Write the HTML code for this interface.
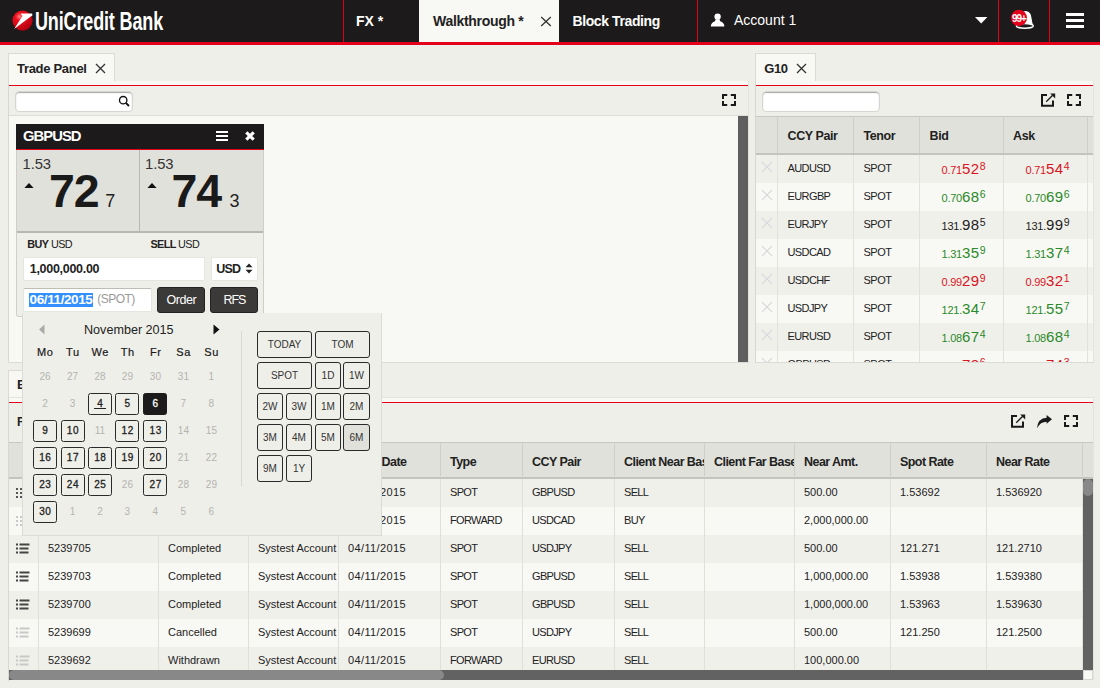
<!DOCTYPE html><html><head><meta charset="utf-8"><style>
html,body{margin:0;padding:0;}
body{width:1100px;height:688px;overflow:hidden;position:relative;background:#efefe9;font-family:"Liberation Sans",sans-serif;}
div{box-sizing:border-box;}
</style></head><body>
<div style="position:absolute;left:0px;top:0px;width:1100px;height:42px;background:#1c1a1a"></div>
<div style="position:absolute;left:0px;top:42px;width:1100px;height:3px;background:#e2001a"></div>
<svg style="position:absolute;left:0;top:0" width="40" height="42" viewBox="0 0 40 42">
<defs><radialGradient id="lg" cx="0.35" cy="0.3" r="0.75"><stop offset="0" stop-color="#ff8a8a"/><stop offset="0.25" stop-color="#f0101e"/><stop offset="1" stop-color="#b0000e"/></radialGradient></defs>
<circle cx="22.5" cy="20.6" r="10.1" fill="url(#lg)"/>
<path d="M14.2 29 L22.4 15.9 L20.6 13.6 L32.1 13.6 L32.5 15.2 Z" fill="#fff"/>
</svg>
<div style="position:absolute;left:35px;top:5.5px;font-size:25px;line-height:30px;font-weight:700;color:#fff;white-space:nowrap;transform:scaleX(0.72);transform-origin:0 0;letter-spacing:-0.2px">UniCredit Bank</div>
<div style="position:absolute;left:343px;top:0px;width:1px;height:42px;background:#e2001a"></div>
<div style="position:absolute;left:356px;top:12.83px;font-size:14px;line-height:16.10px;font-weight:700;color:#fff;white-space:nowrap;">FX *</div>
<div style="position:absolute;left:419px;top:0px;width:140px;height:42px;background:#f8f8f4"></div>
<div style="position:absolute;left:433px;top:13.13px;font-size:14px;line-height:16.10px;font-weight:700;color:#222;white-space:nowrap;letter-spacing:-0.3px">Walkthrough *</div>
<svg style="position:absolute;left:540px;top:16px" width="12" height="11" viewBox="0 0 12 11"><path d="M1.2 1 L10.8 10 M10.8 1 L1.2 10" stroke="#333" stroke-width="1.3"/></svg>
<div style="position:absolute;left:572.5px;top:13.13px;font-size:14px;line-height:16.10px;font-weight:700;color:#fff;white-space:nowrap;letter-spacing:-0.4px">Block Trading</div>
<div style="position:absolute;left:697px;top:0px;width:1px;height:42px;background:#e2001a"></div>
<svg style="position:absolute;left:710px;top:12.6px" width="16" height="14" viewBox="0 0 16 14"><circle cx="7.6" cy="3.6" r="3.2" fill="#fff"/><path d="M5.6 6.2 L9.6 6.2 L10.2 8.2 Q14.2 9.4 14.4 13.4 L0.8 13.4 Q1.0 9.4 5.0 8.2 Z" fill="#fff"/></svg>
<div style="position:absolute;left:734px;top:11.93px;font-size:14px;line-height:16.10px;font-weight:400;color:#fff;white-space:nowrap;">Account 1</div>
<svg style="position:absolute;left:975px;top:17px" width="13" height="7" viewBox="0 0 13 7"><path d="M0 0 L12.4 0 L6.2 6.6 Z" fill="#fff"/></svg>
<div style="position:absolute;left:998px;top:0px;width:1px;height:42px;background:#e2001a"></div>
<svg style="position:absolute;left:1008px;top:8px" width="30" height="24" viewBox="0 0 30 24">
<path d="M8 17.8 Q10.5 15.5 10.8 10 Q11.5 3 18 3 Q23.2 3.6 23.6 10.5 Q24 15 25.6 17.8 Z" fill="#fff"/>
<ellipse cx="16.8" cy="17.9" rx="8.5" ry="2.3" fill="#1c1a1a" stroke="#fff" stroke-width="1.4"/>
<circle cx="10.9" cy="9.9" r="8.1" fill="#e2001a"/>
<text x="10.9" y="13.6" font-family="Liberation Sans" font-size="10" font-weight="700" fill="#fff" text-anchor="middle" letter-spacing="-1">99+</text>
</svg>
<div style="position:absolute;left:1049px;top:0px;width:1px;height:42px;background:#e2001a"></div>
<div style="position:absolute;left:1066px;top:13px;width:18px;height:3px;background:#fff"></div>
<div style="position:absolute;left:1066px;top:19px;width:18px;height:3px;background:#fff"></div>
<div style="position:absolute;left:1066px;top:25px;width:18px;height:3px;background:#fff"></div>
<div style="position:absolute;left:8px;top:53px;width:107px;height:29px;background:#f8f8f4;border:1px solid #dddad4;border-bottom:none"></div>
<div style="position:absolute;left:17px;top:61.64px;font-size:13px;line-height:14.95px;font-weight:700;color:#222;white-space:nowrap;letter-spacing:-0.3px">Trade Panel</div>
<svg style="position:absolute;left:95px;top:63px" width="11" height="11" viewBox="0 0 11 11"><path d="M1 1 L10 10 M10 1 L1 10" stroke="#333" stroke-width="1.3"/></svg>
<div style="position:absolute;left:8px;top:81px;width:741px;height:282px;background:#efefe9;border-left:1px solid #d8d8d2"></div>
<div style="position:absolute;left:9px;top:81px;width:739px;height:4px;background:#f8f8f4"></div>
<div style="position:absolute;left:9px;top:85px;width:739px;height:1px;background:#e2001a"></div>
<div style="position:absolute;left:9px;top:115px;width:739px;height:1px;background:#dedcd6"></div>
<div style="position:absolute;left:9px;top:116px;width:729px;height:246px;background:#f8f8f4"></div>
<div style="position:absolute;left:738px;top:116px;width:10px;height:246px;background:#5f5f5f"></div>
<div style="position:absolute;left:748px;top:81px;width:1px;height:282px;background:#e4e4de"></div>
<div style="position:absolute;left:8px;top:362px;width:741px;height:1px;background:#dcdcd6"></div>
<div style="position:absolute;left:15px;top:91px;width:118px;height:21px;background:#fff;border-radius:4px;box-shadow:inset 0 1px 1px rgba(0,0,0,0.35);border:1px solid #d6d6d0"></div>
<svg style="position:absolute;left:118px;top:95px" width="13" height="13" viewBox="0 0 13 13"><circle cx="5.2" cy="5.2" r="3.7" fill="none" stroke="#111" stroke-width="1.35"/><path d="M7.8 7.8 L11 11" stroke="#111" stroke-width="1.9"/></svg>
<svg style="position:absolute;left:722px;top:94px" width="14" height="12" viewBox="0 0 14 12"><path d="M1 5 L1 1 L5.2 1 M8.8 1 L13 1 L13 5 M13 7 L13 11 L8.8 11 M5.2 11 L1 11 L1 7" fill="none" stroke="#1a1a1a" stroke-width="2"/></svg>
<div style="position:absolute;left:16px;top:124px;width:248px;height:193px;background:#efefe9;border:1px solid #cfcfc9;border-top:none;border-radius:0 0 3px 3px"></div>
<div style="position:absolute;left:16px;top:124px;width:248px;height:26px;background:#1c1a1a"></div>
<div style="position:absolute;left:16px;top:149px;width:248px;height:1px;background:#e2001a"></div>
<div style="position:absolute;left:23px;top:128.41px;font-size:14.8px;line-height:17.02px;font-weight:700;color:#fff;white-space:nowrap;letter-spacing:-0.95px">GBPUSD</div>
<div style="position:absolute;left:216px;top:131px;width:12px;height:2px;background:#fff"></div>
<div style="position:absolute;left:216px;top:135px;width:12px;height:2px;background:#fff"></div>
<div style="position:absolute;left:216px;top:139px;width:12px;height:2px;background:#fff"></div>
<svg style="position:absolute;left:244px;top:130px" width="12" height="12" viewBox="0 0 12 12"><path d="M2.3 2.3 L9.7 9.7 M9.7 2.3 L2.3 9.7" stroke="#fff" stroke-width="3.1"/></svg>
<div style="position:absolute;left:17px;top:150px;width:246px;height:81px;background:#e1e1db"></div>
<div style="position:absolute;left:139px;top:150px;width:1px;height:81px;background:#b8b8b2"></div>
<div style="position:absolute;left:17px;top:231px;width:246px;height:2px;background:#b8b8b2"></div>
<div style="position:absolute;left:22.6px;top:155.71px;font-size:14.8px;line-height:17.02px;font-weight:400;color:#333;white-space:nowrap;letter-spacing:-0.1px">1.53</div>
<svg style="position:absolute;left:24.2px;top:182.8px" width="10" height="5.4" viewBox="0 0 10 5.4"><path d="M0 5.4 L5 0 L10 5.4 Z" fill="#111"/></svg>
<div style="position:absolute;left:49px;top:165.02px;font-size:46.5px;line-height:53.47px;font-weight:700;color:#1a1a1a;white-space:nowrap;letter-spacing:-1px">72</div>
<div style="position:absolute;left:105.3px;top:190.81px;font-size:18px;line-height:20.70px;font-weight:400;color:#222;white-space:nowrap;">7</div>
<div style="position:absolute;left:145.0px;top:155.71px;font-size:14.8px;line-height:17.02px;font-weight:400;color:#333;white-space:nowrap;letter-spacing:-0.1px">1.53</div>
<svg style="position:absolute;left:147.2px;top:182.8px" width="10" height="5.4" viewBox="0 0 10 5.4"><path d="M0 5.4 L5 0 L10 5.4 Z" fill="#111"/></svg>
<div style="position:absolute;left:171.4px;top:165.02px;font-size:46.5px;line-height:53.47px;font-weight:700;color:#1a1a1a;white-space:nowrap;letter-spacing:-1px">74</div>
<div style="position:absolute;left:229.5px;top:190.81px;font-size:18px;line-height:20.70px;font-weight:400;color:#222;white-space:nowrap;">3</div>
<div style="position:absolute;left:27.3px;top:238.23px;font-size:10.8px;line-height:12.42px;font-weight:400;color:#222;white-space:nowrap;letter-spacing:-0.55px"><b>BUY</b> USD</div>
<div style="position:absolute;left:150.5px;top:238.23px;font-size:10.8px;line-height:12.42px;font-weight:400;color:#222;white-space:nowrap;letter-spacing:-0.6px"><b>SELL</b> USD</div>
<div style="position:absolute;left:23px;top:257px;width:182px;height:24px;background:#fff;border:1px solid #e6e6e0;border-radius:2px"></div>
<div style="position:absolute;left:29.8px;top:261.89px;font-size:12.5px;line-height:14.37px;font-weight:700;color:#222;white-space:nowrap;letter-spacing:-0.3px">1,000,000.00</div>
<div style="position:absolute;left:211px;top:257px;width:47px;height:24px;background:#fff;border:1px solid #e6e6e0;border-radius:2px"></div>
<div style="position:absolute;left:216.3px;top:261.69px;font-size:12.5px;line-height:14.37px;font-weight:700;color:#222;white-space:nowrap;letter-spacing:-0.8px">USD</div>
<svg style="position:absolute;left:245px;top:263px" width="8" height="11" viewBox="0 0 8 11"><path d="M0.5 4.2 L4 0.5 L7.5 4.2 Z M0.5 6.8 L4 10.5 L7.5 6.8 Z" fill="#222"/></svg>
<div style="position:absolute;left:23px;top:288px;width:129px;height:24px;background:#fff;border:1px solid #e6e6e0;border-top:1px solid #bdbdb7;border-radius:2px"></div>
<div style="position:absolute;left:29.2px;top:293.3px;width:64px;height:13.6px;background:#3390ff"></div>
<div style="position:absolute;left:29.6px;top:291.78px;font-size:13.5px;line-height:15.52px;font-weight:700;color:#fff;white-space:nowrap;letter-spacing:-0.4px">06/11/2015</div>
<div style="position:absolute;left:97.2px;top:293.14px;font-size:12px;line-height:13.80px;font-weight:400;color:#9a9a9a;white-space:nowrap;letter-spacing:-0.5px">(SPOT)</div>
<div style="position:absolute;left:157px;top:287px;width:48px;height:26px;background:#3c3a38;border:1px solid #222;border-radius:3px"></div>
<div style="position:absolute;left:166.4px;top:293.29px;font-size:12.5px;line-height:14.37px;font-weight:400;color:#fff;white-space:nowrap;letter-spacing:-0.4px">Order</div>
<div style="position:absolute;left:210px;top:287px;width:48px;height:26px;background:#3c3a38;border:1px solid #222;border-radius:3px"></div>
<div style="position:absolute;left:223.5px;top:293.29px;font-size:12.5px;line-height:14.37px;font-weight:400;color:#fff;white-space:nowrap;letter-spacing:-1.1px">RFS</div>
<div style="position:absolute;left:755px;top:53px;width:61px;height:29px;background:#f8f8f4;border:1px solid #dddad4;border-bottom:none"></div>
<div style="position:absolute;left:764.3px;top:61.64px;font-size:13px;line-height:14.95px;font-weight:700;color:#222;white-space:nowrap;letter-spacing:-0.4px">G10</div>
<svg style="position:absolute;left:796px;top:63px" width="11" height="11" viewBox="0 0 11 11"><path d="M1 1 L10 10 M10 1 L1 10" stroke="#333" stroke-width="1.3"/></svg>
<div style="position:absolute;left:755px;top:81px;width:339px;height:282px;background:#efefe9;border-left:1px solid #d8d8d2"></div>
<div style="position:absolute;left:756px;top:81px;width:337px;height:4px;background:#f8f8f4"></div>
<div style="position:absolute;left:756px;top:85px;width:337px;height:1px;background:#e2001a"></div>
<div style="position:absolute;left:1093px;top:81px;width:1px;height:282px;background:#e4e4de"></div>
<div style="position:absolute;left:755px;top:362px;width:339px;height:1px;background:#dcdcd6"></div>
<div style="position:absolute;left:762px;top:91px;width:118px;height:21px;background:#fff;border-radius:4px;box-shadow:inset 0 1px 1px rgba(0,0,0,0.35);border:1px solid #d6d6d0"></div>
<svg style="position:absolute;left:1041px;top:93px" width="15" height="14" viewBox="0 0 15 14"><path d="M6 2 L1 2 L1 12.8 L12 12.8 L12 7.5" fill="none" stroke="#1a1a1a" stroke-width="2"/><path d="M5.2 8.8 L12.5 1.5" stroke="#1a1a1a" stroke-width="1.3"/><path d="M9.2 0.5 L14.2 0.5 L14.2 5.5 Z" fill="#1a1a1a"/></svg>
<svg style="position:absolute;left:1067px;top:94px" width="14" height="12" viewBox="0 0 14 12"><path d="M1 5 L1 1 L5.2 1 M8.8 1 L13 1 L13 5 M13 7 L13 11 L8.8 11 M5.2 11 L1 11 L1 7" fill="none" stroke="#1a1a1a" stroke-width="2"/></svg>
<div style="position:absolute;left:756px;top:116px;width:337px;height:39px;background:#e1e1db"></div>
<div style="position:absolute;left:756px;top:153px;width:337px;height:2px;background:#c4c4be"></div>
<div style="position:absolute;left:756px;top:116px;width:337px;height:1px;background:#c8c8c2"></div>
<div style="position:absolute;left:777px;top:116px;width:1px;height:37px;background:#cfcfc9"></div>
<div style="position:absolute;left:853px;top:116px;width:1px;height:37px;background:#cfcfc9"></div>
<div style="position:absolute;left:919px;top:116px;width:1px;height:37px;background:#cfcfc9"></div>
<div style="position:absolute;left:1003px;top:116px;width:1px;height:37px;background:#cfcfc9"></div>
<div style="position:absolute;left:1087px;top:116px;width:1px;height:37px;background:#cfcfc9"></div>
<div style="position:absolute;left:787.5px;top:128.59px;font-size:12.5px;line-height:14.37px;font-weight:700;color:#222;white-space:nowrap;letter-spacing:-0.4px">CCY Pair</div>
<div style="position:absolute;left:863.5px;top:128.59px;font-size:12.5px;line-height:14.37px;font-weight:700;color:#222;white-space:nowrap;letter-spacing:-0.4px">Tenor</div>
<div style="position:absolute;left:929.5px;top:128.59px;font-size:12.5px;line-height:14.37px;font-weight:700;color:#222;white-space:nowrap;letter-spacing:-0.4px">Bid</div>
<div style="position:absolute;left:1013px;top:128.59px;font-size:12.5px;line-height:14.37px;font-weight:700;color:#222;white-space:nowrap;letter-spacing:-0.4px">Ask</div>
<div style="position:absolute;left:756px;top:155px;width:337px;height:207px;overflow:hidden">
<div style="position:absolute;left:0;top:0px;width:337px;height:28px;background:#f0f0eb"></div>
<div style="position:absolute;left:0;top:28px;width:337px;height:28px;background:#f8f8f4"></div>
<div style="position:absolute;left:0;top:56px;width:337px;height:28px;background:#f0f0eb"></div>
<div style="position:absolute;left:0;top:84px;width:337px;height:28px;background:#f8f8f4"></div>
<div style="position:absolute;left:0;top:112px;width:337px;height:28px;background:#f0f0eb"></div>
<div style="position:absolute;left:0;top:140px;width:337px;height:28px;background:#f8f8f4"></div>
<div style="position:absolute;left:0;top:168px;width:337px;height:28px;background:#f0f0eb"></div>
<div style="position:absolute;left:0;top:196px;width:337px;height:28px;background:#f8f8f4"></div>
<div style="position:absolute;left:21px;top:0;width:1px;height:207px;background:#e2e2dc"></div>
<div style="position:absolute;left:97px;top:0;width:1px;height:207px;background:#e2e2dc"></div>
<div style="position:absolute;left:163px;top:0;width:1px;height:207px;background:#e2e2dc"></div>
<div style="position:absolute;left:247px;top:0;width:1px;height:207px;background:#e2e2dc"></div>
<div style="position:absolute;left:331px;top:0;width:1px;height:207px;background:#e2e2dc"></div>
<svg style="position:absolute;left:5px;top:6px" width="12" height="12" viewBox="0 0 12 12"><path d="M0.9 0.9 L11.1 11.1 M11.1 0.9 L0.9 11.1" stroke="#d6d7db" stroke-width="1.15"/></svg>
<div style="position:absolute;left:31.5px;top:7.04px;font-size:11px;line-height:13px;color:#222;white-space:nowrap;letter-spacing:-0.6px">AUDUSD</div>
<div style="position:absolute;left:107.5px;top:7.04px;font-size:11px;line-height:13px;color:#222;white-space:nowrap;letter-spacing:-0.5px">SPOT</div>
<div style="position:absolute;right:107.5px;top:3.8px;height:20px;white-space:nowrap;color:#d9141e;line-height:20px"><span style="font-size:11px;letter-spacing:-0.25px">0.71</span><span style="font-size:15px;letter-spacing:0.5px">52</span><span style="font-size:10.5px;position:relative;top:-4.1px">8</span></div>
<div style="position:absolute;right:23.5px;top:3.8px;height:20px;white-space:nowrap;color:#d9141e;line-height:20px"><span style="font-size:11px;letter-spacing:-0.25px">0.71</span><span style="font-size:15px;letter-spacing:0.5px">54</span><span style="font-size:10.5px;position:relative;top:-4.1px">4</span></div>
<svg style="position:absolute;left:5px;top:34px" width="12" height="12" viewBox="0 0 12 12"><path d="M0.9 0.9 L11.1 11.1 M11.1 0.9 L0.9 11.1" stroke="#d6d7db" stroke-width="1.15"/></svg>
<div style="position:absolute;left:31.5px;top:35.05px;font-size:11px;line-height:13px;color:#222;white-space:nowrap;letter-spacing:-0.6px">EURGBP</div>
<div style="position:absolute;left:107.5px;top:35.05px;font-size:11px;line-height:13px;color:#222;white-space:nowrap;letter-spacing:-0.5px">SPOT</div>
<div style="position:absolute;right:107.5px;top:31.8px;height:20px;white-space:nowrap;color:#2a8a2a;line-height:20px"><span style="font-size:11px;letter-spacing:-0.25px">0.70</span><span style="font-size:15px;letter-spacing:0.5px">68</span><span style="font-size:10.5px;position:relative;top:-4.1px">6</span></div>
<div style="position:absolute;right:23.5px;top:31.8px;height:20px;white-space:nowrap;color:#2a8a2a;line-height:20px"><span style="font-size:11px;letter-spacing:-0.25px">0.70</span><span style="font-size:15px;letter-spacing:0.5px">69</span><span style="font-size:10.5px;position:relative;top:-4.1px">6</span></div>
<svg style="position:absolute;left:5px;top:62px" width="12" height="12" viewBox="0 0 12 12"><path d="M0.9 0.9 L11.1 11.1 M11.1 0.9 L0.9 11.1" stroke="#d6d7db" stroke-width="1.15"/></svg>
<div style="position:absolute;left:31.5px;top:63.05px;font-size:11px;line-height:13px;color:#222;white-space:nowrap;letter-spacing:-0.6px">EURJPY</div>
<div style="position:absolute;left:107.5px;top:63.05px;font-size:11px;line-height:13px;color:#222;white-space:nowrap;letter-spacing:-0.5px">SPOT</div>
<div style="position:absolute;right:107.5px;top:59.8px;height:20px;white-space:nowrap;color:#222;line-height:20px"><span style="font-size:11px;letter-spacing:-0.25px">131.</span><span style="font-size:15px;letter-spacing:0.5px">98</span><span style="font-size:10.5px;position:relative;top:-4.1px">5</span></div>
<div style="position:absolute;right:23.5px;top:59.8px;height:20px;white-space:nowrap;color:#222;line-height:20px"><span style="font-size:11px;letter-spacing:-0.25px">131.</span><span style="font-size:15px;letter-spacing:0.5px">99</span><span style="font-size:10.5px;position:relative;top:-4.1px">9</span></div>
<svg style="position:absolute;left:5px;top:90px" width="12" height="12" viewBox="0 0 12 12"><path d="M0.9 0.9 L11.1 11.1 M11.1 0.9 L0.9 11.1" stroke="#d6d7db" stroke-width="1.15"/></svg>
<div style="position:absolute;left:31.5px;top:91.05px;font-size:11px;line-height:13px;color:#222;white-space:nowrap;letter-spacing:-0.6px">USDCAD</div>
<div style="position:absolute;left:107.5px;top:91.05px;font-size:11px;line-height:13px;color:#222;white-space:nowrap;letter-spacing:-0.5px">SPOT</div>
<div style="position:absolute;right:107.5px;top:87.8px;height:20px;white-space:nowrap;color:#2a8a2a;line-height:20px"><span style="font-size:11px;letter-spacing:-0.25px">1.31</span><span style="font-size:15px;letter-spacing:0.5px">35</span><span style="font-size:10.5px;position:relative;top:-4.1px">9</span></div>
<div style="position:absolute;right:23.5px;top:87.8px;height:20px;white-space:nowrap;color:#2a8a2a;line-height:20px"><span style="font-size:11px;letter-spacing:-0.25px">1.31</span><span style="font-size:15px;letter-spacing:0.5px">37</span><span style="font-size:10.5px;position:relative;top:-4.1px">4</span></div>
<svg style="position:absolute;left:5px;top:118px" width="12" height="12" viewBox="0 0 12 12"><path d="M0.9 0.9 L11.1 11.1 M11.1 0.9 L0.9 11.1" stroke="#d6d7db" stroke-width="1.15"/></svg>
<div style="position:absolute;left:31.5px;top:119.05px;font-size:11px;line-height:13px;color:#222;white-space:nowrap;letter-spacing:-0.6px">USDCHF</div>
<div style="position:absolute;left:107.5px;top:119.05px;font-size:11px;line-height:13px;color:#222;white-space:nowrap;letter-spacing:-0.5px">SPOT</div>
<div style="position:absolute;right:107.5px;top:115.8px;height:20px;white-space:nowrap;color:#d9141e;line-height:20px"><span style="font-size:11px;letter-spacing:-0.25px">0.99</span><span style="font-size:15px;letter-spacing:0.5px">29</span><span style="font-size:10.5px;position:relative;top:-4.1px">9</span></div>
<div style="position:absolute;right:23.5px;top:115.8px;height:20px;white-space:nowrap;color:#d9141e;line-height:20px"><span style="font-size:11px;letter-spacing:-0.25px">0.99</span><span style="font-size:15px;letter-spacing:0.5px">32</span><span style="font-size:10.5px;position:relative;top:-4.1px">1</span></div>
<svg style="position:absolute;left:5px;top:146px" width="12" height="12" viewBox="0 0 12 12"><path d="M0.9 0.9 L11.1 11.1 M11.1 0.9 L0.9 11.1" stroke="#d6d7db" stroke-width="1.15"/></svg>
<div style="position:absolute;left:31.5px;top:147.04px;font-size:11px;line-height:13px;color:#222;white-space:nowrap;letter-spacing:-0.6px">USDJPY</div>
<div style="position:absolute;left:107.5px;top:147.04px;font-size:11px;line-height:13px;color:#222;white-space:nowrap;letter-spacing:-0.5px">SPOT</div>
<div style="position:absolute;right:107.5px;top:143.8px;height:20px;white-space:nowrap;color:#2a8a2a;line-height:20px"><span style="font-size:11px;letter-spacing:-0.25px">121.</span><span style="font-size:15px;letter-spacing:0.5px">34</span><span style="font-size:10.5px;position:relative;top:-4.1px">7</span></div>
<div style="position:absolute;right:23.5px;top:143.8px;height:20px;white-space:nowrap;color:#2a8a2a;line-height:20px"><span style="font-size:11px;letter-spacing:-0.25px">121.</span><span style="font-size:15px;letter-spacing:0.5px">55</span><span style="font-size:10.5px;position:relative;top:-4.1px">7</span></div>
<svg style="position:absolute;left:5px;top:174px" width="12" height="12" viewBox="0 0 12 12"><path d="M0.9 0.9 L11.1 11.1 M11.1 0.9 L0.9 11.1" stroke="#d6d7db" stroke-width="1.15"/></svg>
<div style="position:absolute;left:31.5px;top:175.04px;font-size:11px;line-height:13px;color:#222;white-space:nowrap;letter-spacing:-0.6px">EURUSD</div>
<div style="position:absolute;left:107.5px;top:175.04px;font-size:11px;line-height:13px;color:#222;white-space:nowrap;letter-spacing:-0.5px">SPOT</div>
<div style="position:absolute;right:107.5px;top:171.8px;height:20px;white-space:nowrap;color:#2a8a2a;line-height:20px"><span style="font-size:11px;letter-spacing:-0.25px">1.08</span><span style="font-size:15px;letter-spacing:0.5px">67</span><span style="font-size:10.5px;position:relative;top:-4.1px">4</span></div>
<div style="position:absolute;right:23.5px;top:171.8px;height:20px;white-space:nowrap;color:#2a8a2a;line-height:20px"><span style="font-size:11px;letter-spacing:-0.25px">1.08</span><span style="font-size:15px;letter-spacing:0.5px">68</span><span style="font-size:10.5px;position:relative;top:-4.1px">4</span></div>
<svg style="position:absolute;left:5px;top:202px" width="12" height="12" viewBox="0 0 12 12"><path d="M0.9 0.9 L11.1 11.1 M11.1 0.9 L0.9 11.1" stroke="#d6d7db" stroke-width="1.15"/></svg>
<div style="position:absolute;left:31.5px;top:203.04px;font-size:11px;line-height:13px;color:#222;white-space:nowrap;letter-spacing:-0.6px">GBPUSD</div>
<div style="position:absolute;left:107.5px;top:203.04px;font-size:11px;line-height:13px;color:#222;white-space:nowrap;letter-spacing:-0.5px">SPOT</div>
<div style="position:absolute;right:107.5px;top:199.8px;height:20px;white-space:nowrap;color:#d9141e;line-height:20px"><span style="font-size:11px;letter-spacing:-0.25px">1.53</span><span style="font-size:15px;letter-spacing:0.5px">72</span><span style="font-size:10.5px;position:relative;top:-4.1px">6</span></div>
<div style="position:absolute;right:23.5px;top:199.8px;height:20px;white-space:nowrap;color:#d9141e;line-height:20px"><span style="font-size:11px;letter-spacing:-0.25px">1.53</span><span style="font-size:15px;letter-spacing:0.5px">74</span><span style="font-size:10.5px;position:relative;top:-4.1px">3</span></div>
</div>
<div style="position:absolute;left:8px;top:370px;width:120px;height:28px;background:#f8f8f4;border:1px solid #dddad4;border-bottom:none"></div>
<div style="position:absolute;left:17px;top:378.44px;font-size:13px;line-height:14.95px;font-weight:700;color:#222;white-space:nowrap;letter-spacing:-0.3px">Blotter</div>
<div style="position:absolute;left:8px;top:397px;width:1086px;height:284px;background:#efefe9;border-left:1px solid #d8d8d2"></div>
<div style="position:absolute;left:9px;top:397px;width:1084px;height:1px;background:#e4e4de"></div>
<div style="position:absolute;left:9px;top:398px;width:1084px;height:4px;background:#f8f8f4"></div>
<div style="position:absolute;left:9px;top:402px;width:1084px;height:1px;background:#e2001a"></div>
<div style="position:absolute;left:17px;top:415.64px;font-size:12px;line-height:13.80px;font-weight:700;color:#222;white-space:nowrap;">Filter</div>
<svg style="position:absolute;left:1011px;top:414px" width="15" height="14" viewBox="0 0 15 14"><path d="M6 2 L1 2 L1 12.8 L12 12.8 L12 7.5" fill="none" stroke="#1a1a1a" stroke-width="2"/><path d="M5.2 8.8 L12.5 1.5" stroke="#1a1a1a" stroke-width="1.3"/><path d="M9.2 0.5 L14.2 0.5 L14.2 5.5 Z" fill="#1a1a1a"/></svg>
<svg style="position:absolute;left:1037px;top:413.5px" width="16" height="15" viewBox="0 0 16 15"><path d="M0 14.2 Q0.8 4.2 9.6 3.7 L9.6 1 L15 5.3 L9.6 9.8 L9.6 7.8 Q3.4 7.8 0 14.2 Z" fill="#1a1a1a"/></svg>
<svg style="position:absolute;left:1064px;top:415px" width="14" height="12" viewBox="0 0 14 12"><path d="M1 5 L1 1 L5.2 1 M8.8 1 L13 1 L13 5 M13 7 L13 11 L8.8 11 M5.2 11 L1 11 L1 7" fill="none" stroke="#1a1a1a" stroke-width="2"/></svg>
<div style="position:absolute;left:1093px;top:397px;width:1px;height:284px;background:#e4e4de"></div>
<div style="position:absolute;left:9px;top:442px;width:1084px;height:35px;background:#e1e1db"></div>
<div style="position:absolute;left:9px;top:477px;width:1084px;height:2px;background:#c4c4be"></div>
<div style="position:absolute;left:9px;top:442px;width:1084px;height:1px;background:#c8c8c2"></div>
<div style="position:absolute;left:38px;top:442px;width:1px;height:34px;background:#cfcfc9"></div>
<div style="position:absolute;left:158px;top:442px;width:1px;height:34px;background:#cfcfc9"></div>
<div style="position:absolute;left:248px;top:442px;width:1px;height:34px;background:#cfcfc9"></div>
<div style="position:absolute;left:338px;top:442px;width:1px;height:34px;background:#cfcfc9"></div>
<div style="position:absolute;left:440px;top:442px;width:1px;height:34px;background:#cfcfc9"></div>
<div style="position:absolute;left:522px;top:442px;width:1px;height:34px;background:#cfcfc9"></div>
<div style="position:absolute;left:614px;top:442px;width:1px;height:34px;background:#cfcfc9"></div>
<div style="position:absolute;left:704px;top:442px;width:1px;height:34px;background:#cfcfc9"></div>
<div style="position:absolute;left:794px;top:442px;width:1px;height:34px;background:#cfcfc9"></div>
<div style="position:absolute;left:890px;top:442px;width:1px;height:34px;background:#cfcfc9"></div>
<div style="position:absolute;left:986px;top:442px;width:1px;height:34px;background:#cfcfc9"></div>
<div style="position:absolute;left:1082px;top:442px;width:1px;height:34px;background:#cfcfc9"></div>
<div style="position:absolute;left:9px;top:442px;width:1074px;height:34px;overflow:hidden">
<div style="position:absolute;left:29px;top:0;width:120px;height:34px;overflow:hidden"><div style="position:absolute;left:10px;top:12.79px;font-size:12.5px;line-height:15px;font-weight:700;color:#222;white-space:nowrap;letter-spacing:-0.55px">Deal ID</div></div>
<div style="position:absolute;left:149px;top:0;width:90px;height:34px;overflow:hidden"><div style="position:absolute;left:10px;top:12.79px;font-size:12.5px;line-height:15px;font-weight:700;color:#222;white-space:nowrap;letter-spacing:-0.55px">Status</div></div>
<div style="position:absolute;left:239px;top:0;width:90px;height:34px;overflow:hidden"><div style="position:absolute;left:10px;top:12.79px;font-size:12.5px;line-height:15px;font-weight:700;color:#222;white-space:nowrap;letter-spacing:-0.55px">Account</div></div>
<div style="position:absolute;left:329px;top:0;width:102px;height:34px;overflow:hidden"><div style="position:absolute;left:10px;top:12.79px;font-size:12.5px;line-height:15px;font-weight:700;color:#222;white-space:nowrap;letter-spacing:-0.55px">Trade Date</div></div>
<div style="position:absolute;left:431px;top:0;width:82px;height:34px;overflow:hidden"><div style="position:absolute;left:10px;top:12.79px;font-size:12.5px;line-height:15px;font-weight:700;color:#222;white-space:nowrap;letter-spacing:-0.55px">Type</div></div>
<div style="position:absolute;left:513px;top:0;width:92px;height:34px;overflow:hidden"><div style="position:absolute;left:10px;top:12.79px;font-size:12.5px;line-height:15px;font-weight:700;color:#222;white-space:nowrap;letter-spacing:-0.55px">CCY Pair</div></div>
<div style="position:absolute;left:605px;top:0;width:90px;height:34px;overflow:hidden"><div style="position:absolute;left:10px;top:12.79px;font-size:12.5px;line-height:15px;font-weight:700;color:#222;white-space:nowrap;letter-spacing:-0.55px">Client Near Base</div></div>
<div style="position:absolute;left:695px;top:0;width:90px;height:34px;overflow:hidden"><div style="position:absolute;left:10px;top:12.79px;font-size:12.5px;line-height:15px;font-weight:700;color:#222;white-space:nowrap;letter-spacing:-0.55px">Client Far Base</div></div>
<div style="position:absolute;left:785px;top:0;width:96px;height:34px;overflow:hidden"><div style="position:absolute;left:10px;top:12.79px;font-size:12.5px;line-height:15px;font-weight:700;color:#222;white-space:nowrap;letter-spacing:-0.55px">Near Amt.</div></div>
<div style="position:absolute;left:881px;top:0;width:96px;height:34px;overflow:hidden"><div style="position:absolute;left:10px;top:12.79px;font-size:12.5px;line-height:15px;font-weight:700;color:#222;white-space:nowrap;letter-spacing:-0.55px">Spot Rate</div></div>
<div style="position:absolute;left:977px;top:0;width:96px;height:34px;overflow:hidden"><div style="position:absolute;left:10px;top:12.79px;font-size:12.5px;line-height:15px;font-weight:700;color:#222;white-space:nowrap;letter-spacing:-0.55px">Near Rate</div></div>
</div>
<div style="position:absolute;left:9px;top:479px;width:1074px;height:191px;overflow:hidden">
<div style="position:absolute;left:0;top:0px;width:1074px;height:28px;background:#f0f0eb"></div>
<div style="position:absolute;left:0;top:28px;width:1074px;height:28px;background:#f8f8f4"></div>
<div style="position:absolute;left:0;top:56px;width:1074px;height:28px;background:#f0f0eb"></div>
<div style="position:absolute;left:0;top:84px;width:1074px;height:28px;background:#f8f8f4"></div>
<div style="position:absolute;left:0;top:112px;width:1074px;height:28px;background:#f0f0eb"></div>
<div style="position:absolute;left:0;top:140px;width:1074px;height:28px;background:#f8f8f4"></div>
<div style="position:absolute;left:0;top:168px;width:1074px;height:28px;background:#f0f0eb"></div>
<div style="position:absolute;left:29px;top:0;width:1px;height:191px;background:#e0e0da"></div>
<div style="position:absolute;left:149px;top:0;width:1px;height:191px;background:#e0e0da"></div>
<div style="position:absolute;left:239px;top:0;width:1px;height:191px;background:#e0e0da"></div>
<div style="position:absolute;left:329px;top:0;width:1px;height:191px;background:#e0e0da"></div>
<div style="position:absolute;left:431px;top:0;width:1px;height:191px;background:#e0e0da"></div>
<div style="position:absolute;left:513px;top:0;width:1px;height:191px;background:#e0e0da"></div>
<div style="position:absolute;left:605px;top:0;width:1px;height:191px;background:#e0e0da"></div>
<div style="position:absolute;left:695px;top:0;width:1px;height:191px;background:#e0e0da"></div>
<div style="position:absolute;left:785px;top:0;width:1px;height:191px;background:#e0e0da"></div>
<div style="position:absolute;left:881px;top:0;width:1px;height:191px;background:#e0e0da"></div>
<div style="position:absolute;left:977px;top:0;width:1px;height:191px;background:#e0e0da"></div>
<div style="position:absolute;left:1073px;top:0;width:1px;height:191px;background:#e0e0da"></div>
<svg style="position:absolute;left:7px;top:9px" width="8" height="10" viewBox="0 0 8 10"><g fill="#555"><rect x="0" y="0" width="2" height="2"/><rect x="4" y="0" width="2" height="2"/><rect x="0" y="4" width="2" height="2"/><rect x="4" y="4" width="2" height="2"/><rect x="0" y="8" width="2" height="2"/><rect x="4" y="8" width="2" height="2"/></g></svg>
<div style="position:absolute;left:29px;top:0px;width:120px;height:28px;overflow:hidden"><div style="position:absolute;left:10px;top:6.85px;font-size:11px;line-height:13px;color:#222;white-space:nowrap;letter-spacing:0px">5239710</div></div>
<div style="position:absolute;left:149px;top:0px;width:90px;height:28px;overflow:hidden"><div style="position:absolute;left:10px;top:6.85px;font-size:11px;line-height:13px;color:#222;white-space:nowrap;letter-spacing:0px">Completed</div></div>
<div style="position:absolute;left:239px;top:0px;width:90px;height:28px;overflow:hidden"><div style="position:absolute;left:10px;top:6.85px;font-size:11px;line-height:13px;color:#222;white-space:nowrap;letter-spacing:0px">Systest Account</div></div>
<div style="position:absolute;left:329px;top:0px;width:102px;height:28px;overflow:hidden"><div style="position:absolute;left:10px;top:6.85px;font-size:11px;line-height:13px;color:#222;white-space:nowrap;letter-spacing:0.38px">04/11/2015</div></div>
<div style="position:absolute;left:431px;top:0px;width:82px;height:28px;overflow:hidden"><div style="position:absolute;left:10px;top:6.85px;font-size:11px;line-height:13px;color:#222;white-space:nowrap;letter-spacing:-0.65px">SPOT</div></div>
<div style="position:absolute;left:513px;top:0px;width:92px;height:28px;overflow:hidden"><div style="position:absolute;left:10px;top:6.85px;font-size:11px;line-height:13px;color:#222;white-space:nowrap;letter-spacing:-0.65px">GBPUSD</div></div>
<div style="position:absolute;left:605px;top:0px;width:90px;height:28px;overflow:hidden"><div style="position:absolute;left:10px;top:6.85px;font-size:11px;line-height:13px;color:#222;white-space:nowrap;letter-spacing:-0.65px">SELL</div></div>
<div style="position:absolute;left:785px;top:0px;width:96px;height:28px;overflow:hidden"><div style="position:absolute;left:10px;top:6.85px;font-size:11px;line-height:13px;color:#222;white-space:nowrap;letter-spacing:0px">500.00</div></div>
<div style="position:absolute;left:881px;top:0px;width:96px;height:28px;overflow:hidden"><div style="position:absolute;left:10px;top:6.85px;font-size:11px;line-height:13px;color:#222;white-space:nowrap;letter-spacing:0px">1.53692</div></div>
<div style="position:absolute;left:977px;top:0px;width:96px;height:28px;overflow:hidden"><div style="position:absolute;left:10px;top:6.85px;font-size:11px;line-height:13px;color:#222;white-space:nowrap;letter-spacing:0px">1.536920</div></div>
<svg style="position:absolute;left:7px;top:37px" width="8" height="10" viewBox="0 0 8 10"><g fill="#c8c8c8"><rect x="0" y="0" width="2" height="2"/><rect x="4" y="0" width="2" height="2"/><rect x="0" y="4" width="2" height="2"/><rect x="4" y="4" width="2" height="2"/><rect x="0" y="8" width="2" height="2"/><rect x="4" y="8" width="2" height="2"/></g></svg>
<div style="position:absolute;left:29px;top:28px;width:120px;height:28px;overflow:hidden"><div style="position:absolute;left:10px;top:6.85px;font-size:11px;line-height:13px;color:#222;white-space:nowrap;letter-spacing:0px">5239707</div></div>
<div style="position:absolute;left:149px;top:28px;width:90px;height:28px;overflow:hidden"><div style="position:absolute;left:10px;top:6.85px;font-size:11px;line-height:13px;color:#222;white-space:nowrap;letter-spacing:0px">Pending</div></div>
<div style="position:absolute;left:239px;top:28px;width:90px;height:28px;overflow:hidden"><div style="position:absolute;left:10px;top:6.85px;font-size:11px;line-height:13px;color:#222;white-space:nowrap;letter-spacing:0px">Systest Account</div></div>
<div style="position:absolute;left:329px;top:28px;width:102px;height:28px;overflow:hidden"><div style="position:absolute;left:10px;top:6.85px;font-size:11px;line-height:13px;color:#222;white-space:nowrap;letter-spacing:0.38px">04/11/2015</div></div>
<div style="position:absolute;left:431px;top:28px;width:82px;height:28px;overflow:hidden"><div style="position:absolute;left:10px;top:6.85px;font-size:11px;line-height:13px;color:#222;white-space:nowrap;letter-spacing:-0.65px">FORWARD</div></div>
<div style="position:absolute;left:513px;top:28px;width:92px;height:28px;overflow:hidden"><div style="position:absolute;left:10px;top:6.85px;font-size:11px;line-height:13px;color:#222;white-space:nowrap;letter-spacing:-0.65px">USDCAD</div></div>
<div style="position:absolute;left:605px;top:28px;width:90px;height:28px;overflow:hidden"><div style="position:absolute;left:10px;top:6.85px;font-size:11px;line-height:13px;color:#222;white-space:nowrap;letter-spacing:-0.65px">BUY</div></div>
<div style="position:absolute;left:785px;top:28px;width:96px;height:28px;overflow:hidden"><div style="position:absolute;left:10px;top:6.85px;font-size:11px;line-height:13px;color:#222;white-space:nowrap;letter-spacing:0px">2,000,000.00</div></div>
<svg style="position:absolute;left:7px;top:64px" width="14" height="11" viewBox="0 0 14 11"><g fill="#444"><rect x="0" y="0.5" width="2" height="2"/><rect x="3.5" y="0.5" width="10" height="2"/><rect x="0" y="4.5" width="2" height="2"/><rect x="3.5" y="4.5" width="9" height="2"/><rect x="0" y="8.5" width="2" height="2"/><rect x="3.5" y="8.5" width="9" height="2"/></g></svg>
<div style="position:absolute;left:29px;top:56px;width:120px;height:28px;overflow:hidden"><div style="position:absolute;left:10px;top:6.85px;font-size:11px;line-height:13px;color:#222;white-space:nowrap;letter-spacing:0px">5239705</div></div>
<div style="position:absolute;left:149px;top:56px;width:90px;height:28px;overflow:hidden"><div style="position:absolute;left:10px;top:6.85px;font-size:11px;line-height:13px;color:#222;white-space:nowrap;letter-spacing:0px">Completed</div></div>
<div style="position:absolute;left:239px;top:56px;width:90px;height:28px;overflow:hidden"><div style="position:absolute;left:10px;top:6.85px;font-size:11px;line-height:13px;color:#222;white-space:nowrap;letter-spacing:0px">Systest Account</div></div>
<div style="position:absolute;left:329px;top:56px;width:102px;height:28px;overflow:hidden"><div style="position:absolute;left:10px;top:6.85px;font-size:11px;line-height:13px;color:#222;white-space:nowrap;letter-spacing:0.38px">04/11/2015</div></div>
<div style="position:absolute;left:431px;top:56px;width:82px;height:28px;overflow:hidden"><div style="position:absolute;left:10px;top:6.85px;font-size:11px;line-height:13px;color:#222;white-space:nowrap;letter-spacing:-0.65px">SPOT</div></div>
<div style="position:absolute;left:513px;top:56px;width:92px;height:28px;overflow:hidden"><div style="position:absolute;left:10px;top:6.85px;font-size:11px;line-height:13px;color:#222;white-space:nowrap;letter-spacing:-0.65px">USDJPY</div></div>
<div style="position:absolute;left:605px;top:56px;width:90px;height:28px;overflow:hidden"><div style="position:absolute;left:10px;top:6.85px;font-size:11px;line-height:13px;color:#222;white-space:nowrap;letter-spacing:-0.65px">SELL</div></div>
<div style="position:absolute;left:785px;top:56px;width:96px;height:28px;overflow:hidden"><div style="position:absolute;left:10px;top:6.85px;font-size:11px;line-height:13px;color:#222;white-space:nowrap;letter-spacing:0px">500.00</div></div>
<div style="position:absolute;left:881px;top:56px;width:96px;height:28px;overflow:hidden"><div style="position:absolute;left:10px;top:6.85px;font-size:11px;line-height:13px;color:#222;white-space:nowrap;letter-spacing:0px">121.271</div></div>
<div style="position:absolute;left:977px;top:56px;width:96px;height:28px;overflow:hidden"><div style="position:absolute;left:10px;top:6.85px;font-size:11px;line-height:13px;color:#222;white-space:nowrap;letter-spacing:0px">121.2710</div></div>
<svg style="position:absolute;left:7px;top:92px" width="14" height="11" viewBox="0 0 14 11"><g fill="#444"><rect x="0" y="0.5" width="2" height="2"/><rect x="3.5" y="0.5" width="10" height="2"/><rect x="0" y="4.5" width="2" height="2"/><rect x="3.5" y="4.5" width="9" height="2"/><rect x="0" y="8.5" width="2" height="2"/><rect x="3.5" y="8.5" width="9" height="2"/></g></svg>
<div style="position:absolute;left:29px;top:84px;width:120px;height:28px;overflow:hidden"><div style="position:absolute;left:10px;top:6.85px;font-size:11px;line-height:13px;color:#222;white-space:nowrap;letter-spacing:0px">5239703</div></div>
<div style="position:absolute;left:149px;top:84px;width:90px;height:28px;overflow:hidden"><div style="position:absolute;left:10px;top:6.85px;font-size:11px;line-height:13px;color:#222;white-space:nowrap;letter-spacing:0px">Completed</div></div>
<div style="position:absolute;left:239px;top:84px;width:90px;height:28px;overflow:hidden"><div style="position:absolute;left:10px;top:6.85px;font-size:11px;line-height:13px;color:#222;white-space:nowrap;letter-spacing:0px">Systest Account</div></div>
<div style="position:absolute;left:329px;top:84px;width:102px;height:28px;overflow:hidden"><div style="position:absolute;left:10px;top:6.85px;font-size:11px;line-height:13px;color:#222;white-space:nowrap;letter-spacing:0.38px">04/11/2015</div></div>
<div style="position:absolute;left:431px;top:84px;width:82px;height:28px;overflow:hidden"><div style="position:absolute;left:10px;top:6.85px;font-size:11px;line-height:13px;color:#222;white-space:nowrap;letter-spacing:-0.65px">SPOT</div></div>
<div style="position:absolute;left:513px;top:84px;width:92px;height:28px;overflow:hidden"><div style="position:absolute;left:10px;top:6.85px;font-size:11px;line-height:13px;color:#222;white-space:nowrap;letter-spacing:-0.65px">GBPUSD</div></div>
<div style="position:absolute;left:605px;top:84px;width:90px;height:28px;overflow:hidden"><div style="position:absolute;left:10px;top:6.85px;font-size:11px;line-height:13px;color:#222;white-space:nowrap;letter-spacing:-0.65px">SELL</div></div>
<div style="position:absolute;left:785px;top:84px;width:96px;height:28px;overflow:hidden"><div style="position:absolute;left:10px;top:6.85px;font-size:11px;line-height:13px;color:#222;white-space:nowrap;letter-spacing:0px">1,000,000.00</div></div>
<div style="position:absolute;left:881px;top:84px;width:96px;height:28px;overflow:hidden"><div style="position:absolute;left:10px;top:6.85px;font-size:11px;line-height:13px;color:#222;white-space:nowrap;letter-spacing:0px">1.53938</div></div>
<div style="position:absolute;left:977px;top:84px;width:96px;height:28px;overflow:hidden"><div style="position:absolute;left:10px;top:6.85px;font-size:11px;line-height:13px;color:#222;white-space:nowrap;letter-spacing:0px">1.539380</div></div>
<svg style="position:absolute;left:7px;top:120px" width="14" height="11" viewBox="0 0 14 11"><g fill="#444"><rect x="0" y="0.5" width="2" height="2"/><rect x="3.5" y="0.5" width="10" height="2"/><rect x="0" y="4.5" width="2" height="2"/><rect x="3.5" y="4.5" width="9" height="2"/><rect x="0" y="8.5" width="2" height="2"/><rect x="3.5" y="8.5" width="9" height="2"/></g></svg>
<div style="position:absolute;left:29px;top:112px;width:120px;height:28px;overflow:hidden"><div style="position:absolute;left:10px;top:6.85px;font-size:11px;line-height:13px;color:#222;white-space:nowrap;letter-spacing:0px">5239700</div></div>
<div style="position:absolute;left:149px;top:112px;width:90px;height:28px;overflow:hidden"><div style="position:absolute;left:10px;top:6.85px;font-size:11px;line-height:13px;color:#222;white-space:nowrap;letter-spacing:0px">Completed</div></div>
<div style="position:absolute;left:239px;top:112px;width:90px;height:28px;overflow:hidden"><div style="position:absolute;left:10px;top:6.85px;font-size:11px;line-height:13px;color:#222;white-space:nowrap;letter-spacing:0px">Systest Account</div></div>
<div style="position:absolute;left:329px;top:112px;width:102px;height:28px;overflow:hidden"><div style="position:absolute;left:10px;top:6.85px;font-size:11px;line-height:13px;color:#222;white-space:nowrap;letter-spacing:0.38px">04/11/2015</div></div>
<div style="position:absolute;left:431px;top:112px;width:82px;height:28px;overflow:hidden"><div style="position:absolute;left:10px;top:6.85px;font-size:11px;line-height:13px;color:#222;white-space:nowrap;letter-spacing:-0.65px">SPOT</div></div>
<div style="position:absolute;left:513px;top:112px;width:92px;height:28px;overflow:hidden"><div style="position:absolute;left:10px;top:6.85px;font-size:11px;line-height:13px;color:#222;white-space:nowrap;letter-spacing:-0.65px">GBPUSD</div></div>
<div style="position:absolute;left:605px;top:112px;width:90px;height:28px;overflow:hidden"><div style="position:absolute;left:10px;top:6.85px;font-size:11px;line-height:13px;color:#222;white-space:nowrap;letter-spacing:-0.65px">SELL</div></div>
<div style="position:absolute;left:785px;top:112px;width:96px;height:28px;overflow:hidden"><div style="position:absolute;left:10px;top:6.85px;font-size:11px;line-height:13px;color:#222;white-space:nowrap;letter-spacing:0px">1,000,000.00</div></div>
<div style="position:absolute;left:881px;top:112px;width:96px;height:28px;overflow:hidden"><div style="position:absolute;left:10px;top:6.85px;font-size:11px;line-height:13px;color:#222;white-space:nowrap;letter-spacing:0px">1.53963</div></div>
<div style="position:absolute;left:977px;top:112px;width:96px;height:28px;overflow:hidden"><div style="position:absolute;left:10px;top:6.85px;font-size:11px;line-height:13px;color:#222;white-space:nowrap;letter-spacing:0px">1.539630</div></div>
<svg style="position:absolute;left:7px;top:148px" width="14" height="11" viewBox="0 0 14 11"><g fill="#c8c8c8"><rect x="0" y="0.5" width="2" height="2"/><rect x="3.5" y="0.5" width="10" height="2"/><rect x="0" y="4.5" width="2" height="2"/><rect x="3.5" y="4.5" width="9" height="2"/><rect x="0" y="8.5" width="2" height="2"/><rect x="3.5" y="8.5" width="9" height="2"/></g></svg>
<div style="position:absolute;left:29px;top:140px;width:120px;height:28px;overflow:hidden"><div style="position:absolute;left:10px;top:6.85px;font-size:11px;line-height:13px;color:#222;white-space:nowrap;letter-spacing:0px">5239699</div></div>
<div style="position:absolute;left:149px;top:140px;width:90px;height:28px;overflow:hidden"><div style="position:absolute;left:10px;top:6.85px;font-size:11px;line-height:13px;color:#222;white-space:nowrap;letter-spacing:0px">Cancelled</div></div>
<div style="position:absolute;left:239px;top:140px;width:90px;height:28px;overflow:hidden"><div style="position:absolute;left:10px;top:6.85px;font-size:11px;line-height:13px;color:#222;white-space:nowrap;letter-spacing:0px">Systest Account</div></div>
<div style="position:absolute;left:329px;top:140px;width:102px;height:28px;overflow:hidden"><div style="position:absolute;left:10px;top:6.85px;font-size:11px;line-height:13px;color:#222;white-space:nowrap;letter-spacing:0.38px">04/11/2015</div></div>
<div style="position:absolute;left:431px;top:140px;width:82px;height:28px;overflow:hidden"><div style="position:absolute;left:10px;top:6.85px;font-size:11px;line-height:13px;color:#222;white-space:nowrap;letter-spacing:-0.65px">SPOT</div></div>
<div style="position:absolute;left:513px;top:140px;width:92px;height:28px;overflow:hidden"><div style="position:absolute;left:10px;top:6.85px;font-size:11px;line-height:13px;color:#222;white-space:nowrap;letter-spacing:-0.65px">USDJPY</div></div>
<div style="position:absolute;left:605px;top:140px;width:90px;height:28px;overflow:hidden"><div style="position:absolute;left:10px;top:6.85px;font-size:11px;line-height:13px;color:#222;white-space:nowrap;letter-spacing:-0.65px">SELL</div></div>
<div style="position:absolute;left:785px;top:140px;width:96px;height:28px;overflow:hidden"><div style="position:absolute;left:10px;top:6.85px;font-size:11px;line-height:13px;color:#222;white-space:nowrap;letter-spacing:0px">500.00</div></div>
<div style="position:absolute;left:881px;top:140px;width:96px;height:28px;overflow:hidden"><div style="position:absolute;left:10px;top:6.85px;font-size:11px;line-height:13px;color:#222;white-space:nowrap;letter-spacing:0px">121.250</div></div>
<div style="position:absolute;left:977px;top:140px;width:96px;height:28px;overflow:hidden"><div style="position:absolute;left:10px;top:6.85px;font-size:11px;line-height:13px;color:#222;white-space:nowrap;letter-spacing:0px">121.2500</div></div>
<svg style="position:absolute;left:7px;top:176px" width="14" height="11" viewBox="0 0 14 11"><g fill="#c8c8c8"><rect x="0" y="0.5" width="2" height="2"/><rect x="3.5" y="0.5" width="10" height="2"/><rect x="0" y="4.5" width="2" height="2"/><rect x="3.5" y="4.5" width="9" height="2"/><rect x="0" y="8.5" width="2" height="2"/><rect x="3.5" y="8.5" width="9" height="2"/></g></svg>
<div style="position:absolute;left:29px;top:168px;width:120px;height:28px;overflow:hidden"><div style="position:absolute;left:10px;top:6.85px;font-size:11px;line-height:13px;color:#222;white-space:nowrap;letter-spacing:0px">5239692</div></div>
<div style="position:absolute;left:149px;top:168px;width:90px;height:28px;overflow:hidden"><div style="position:absolute;left:10px;top:6.85px;font-size:11px;line-height:13px;color:#222;white-space:nowrap;letter-spacing:0px">Withdrawn</div></div>
<div style="position:absolute;left:239px;top:168px;width:90px;height:28px;overflow:hidden"><div style="position:absolute;left:10px;top:6.85px;font-size:11px;line-height:13px;color:#222;white-space:nowrap;letter-spacing:0px">Systest Account</div></div>
<div style="position:absolute;left:329px;top:168px;width:102px;height:28px;overflow:hidden"><div style="position:absolute;left:10px;top:6.85px;font-size:11px;line-height:13px;color:#222;white-space:nowrap;letter-spacing:0.38px">04/11/2015</div></div>
<div style="position:absolute;left:431px;top:168px;width:82px;height:28px;overflow:hidden"><div style="position:absolute;left:10px;top:6.85px;font-size:11px;line-height:13px;color:#222;white-space:nowrap;letter-spacing:-0.65px">FORWARD</div></div>
<div style="position:absolute;left:513px;top:168px;width:92px;height:28px;overflow:hidden"><div style="position:absolute;left:10px;top:6.85px;font-size:11px;line-height:13px;color:#222;white-space:nowrap;letter-spacing:-0.65px">EURUSD</div></div>
<div style="position:absolute;left:605px;top:168px;width:90px;height:28px;overflow:hidden"><div style="position:absolute;left:10px;top:6.85px;font-size:11px;line-height:13px;color:#222;white-space:nowrap;letter-spacing:-0.65px">SELL</div></div>
<div style="position:absolute;left:785px;top:168px;width:96px;height:28px;overflow:hidden"><div style="position:absolute;left:10px;top:6.85px;font-size:11px;line-height:13px;color:#222;white-space:nowrap;letter-spacing:0px">100,000.00</div></div>
</div>
<div style="position:absolute;left:9px;top:670px;width:1074px;height:10px;background:#626262"></div>
<div style="position:absolute;left:9px;top:670px;width:435px;height:10px;background:#888;border-radius:5px 5px 5px 5px"></div>
<div style="position:absolute;left:1083px;top:479px;width:10px;height:191px;background:#626262"></div>
<div style="position:absolute;left:1083px;top:479px;width:10px;height:17px;background:#888;border-radius:5px"></div>
<div style="position:absolute;left:1083px;top:670px;width:10px;height:10px;background:#f8f8f4;border:1px solid #d8d8d2"></div>
<div style="position:absolute;left:22px;top:313px;width:360px;height:223px;background:#efefe9;border:1px solid #dcdcd6;border-top:none"></div>
<svg style="position:absolute;left:38px;top:324px" width="8" height="11" viewBox="0 0 8 11"><path d="M6.5 0.5 L1 5.5 L6.5 10.5 Z" fill="#aaa"/></svg>
<svg style="position:absolute;left:212px;top:324px" width="9" height="11" viewBox="0 0 9 11"><path d="M1.5 0.5 L7.5 5.5 L1.5 10.5 Z" fill="#111"/></svg>
<div style="position:absolute;left:84px;top:322.60px;font-size:12.6px;line-height:14.49px;font-weight:400;color:#222;white-space:nowrap;">November 2015</div>
<div style="position:absolute;left:30px;top:346.05px;width:30px;text-align:center;font-size:11px;line-height:13px;font-weight:400;color:#1a1a1a;-webkit-text-stroke:0.2px #1a1a1a;letter-spacing:0.6px;text-indent:0.6px">Mo</div>
<div style="position:absolute;left:57.599999999999994px;top:346.05px;width:30px;text-align:center;font-size:11px;line-height:13px;font-weight:400;color:#1a1a1a;-webkit-text-stroke:0.2px #1a1a1a;letter-spacing:0.6px;text-indent:0.6px">Tu</div>
<div style="position:absolute;left:85px;top:346.05px;width:30px;text-align:center;font-size:11px;line-height:13px;font-weight:400;color:#1a1a1a;-webkit-text-stroke:0.2px #1a1a1a;letter-spacing:0.6px;text-indent:0.6px">We</div>
<div style="position:absolute;left:112.4px;top:346.05px;width:30px;text-align:center;font-size:11px;line-height:13px;font-weight:400;color:#1a1a1a;-webkit-text-stroke:0.2px #1a1a1a;letter-spacing:0.6px;text-indent:0.6px">Th</div>
<div style="position:absolute;left:140.4px;top:346.05px;width:30px;text-align:center;font-size:11px;line-height:13px;font-weight:400;color:#1a1a1a;-webkit-text-stroke:0.2px #1a1a1a;letter-spacing:0.6px;text-indent:0.6px">Fr</div>
<div style="position:absolute;left:168.4px;top:346.05px;width:30px;text-align:center;font-size:11px;line-height:13px;font-weight:400;color:#1a1a1a;-webkit-text-stroke:0.2px #1a1a1a;letter-spacing:0.6px;text-indent:0.6px">Sa</div>
<div style="position:absolute;left:196.4px;top:346.05px;width:30px;text-align:center;font-size:11px;line-height:13px;font-weight:400;color:#1a1a1a;-webkit-text-stroke:0.2px #1a1a1a;letter-spacing:0.6px;text-indent:0.6px">Su</div>
<div style="position:absolute;left:30px;top:370.95px;width:30px;text-align:center;font-size:10px;line-height:12px;color:#b4b4b0">26</div>
<div style="position:absolute;left:57.599999999999994px;top:370.95px;width:30px;text-align:center;font-size:10px;line-height:12px;color:#b4b4b0">27</div>
<div style="position:absolute;left:85px;top:370.95px;width:30px;text-align:center;font-size:10px;line-height:12px;color:#b4b4b0">28</div>
<div style="position:absolute;left:112.4px;top:370.95px;width:30px;text-align:center;font-size:10px;line-height:12px;color:#b4b4b0">29</div>
<div style="position:absolute;left:140.4px;top:370.95px;width:30px;text-align:center;font-size:10px;line-height:12px;color:#b4b4b0">30</div>
<div style="position:absolute;left:168.4px;top:370.95px;width:30px;text-align:center;font-size:10px;line-height:12px;color:#b4b4b0">31</div>
<div style="position:absolute;left:196.4px;top:370.95px;width:30px;text-align:center;font-size:10px;line-height:12px;color:#b4b4b0">1</div>
<div style="position:absolute;left:30px;top:397.95px;width:30px;text-align:center;font-size:10px;line-height:12px;color:#b4b4b0">2</div>
<div style="position:absolute;left:57.599999999999994px;top:397.95px;width:30px;text-align:center;font-size:10px;line-height:12px;color:#b4b4b0">3</div>
<div style="position:absolute;left:88px;top:392.5px;width:24px;height:22px;border-radius:2.5px;background:#efefe9;color:#222;border:1px solid #2a2a2a;font-size:10px;line-height:20px;text-align:center;font-weight:400;-webkit-text-stroke:0.3px currentColor;letter-spacing:0.6px;text-indent:0.6px">4</div>
<div style="position:absolute;left:93.5px;top:408.0px;width:12px;height:1px;background:#222"></div>
<div style="position:absolute;left:115.4px;top:392.5px;width:24px;height:22px;border-radius:2.5px;background:#efefe9;color:#222;border:1px solid #2a2a2a;font-size:10px;line-height:20px;text-align:center;font-weight:400;-webkit-text-stroke:0.3px currentColor;letter-spacing:0.6px;text-indent:0.6px">5</div>
<div style="position:absolute;left:143.4px;top:392.5px;width:24px;height:22px;border-radius:2.5px;background:#1c1a1a;color:#fff;border:1px solid #1c1a1a;font-size:10px;line-height:20px;text-align:center;font-weight:400;-webkit-text-stroke:0.3px currentColor;letter-spacing:0.6px;text-indent:0.6px">6</div>
<div style="position:absolute;left:168.4px;top:397.95px;width:30px;text-align:center;font-size:10px;line-height:12px;color:#b4b4b0">7</div>
<div style="position:absolute;left:196.4px;top:397.95px;width:30px;text-align:center;font-size:10px;line-height:12px;color:#b4b4b0">8</div>
<div style="position:absolute;left:33px;top:419.5px;width:24px;height:22px;border-radius:2.5px;background:#efefe9;color:#222;border:1px solid #2a2a2a;font-size:10px;line-height:20px;text-align:center;font-weight:400;-webkit-text-stroke:0.3px currentColor;letter-spacing:0.6px;text-indent:0.6px">9</div>
<div style="position:absolute;left:60.599999999999994px;top:419.5px;width:24px;height:22px;border-radius:2.5px;background:#efefe9;color:#222;border:1px solid #2a2a2a;font-size:10px;line-height:20px;text-align:center;font-weight:400;-webkit-text-stroke:0.3px currentColor;letter-spacing:0.6px;text-indent:0.6px">10</div>
<div style="position:absolute;left:85px;top:424.95px;width:30px;text-align:center;font-size:10px;line-height:12px;color:#b4b4b0">11</div>
<div style="position:absolute;left:115.4px;top:419.5px;width:24px;height:22px;border-radius:2.5px;background:#efefe9;color:#222;border:1px solid #2a2a2a;font-size:10px;line-height:20px;text-align:center;font-weight:400;-webkit-text-stroke:0.3px currentColor;letter-spacing:0.6px;text-indent:0.6px">12</div>
<div style="position:absolute;left:143.4px;top:419.5px;width:24px;height:22px;border-radius:2.5px;background:#efefe9;color:#222;border:1px solid #2a2a2a;font-size:10px;line-height:20px;text-align:center;font-weight:400;-webkit-text-stroke:0.3px currentColor;letter-spacing:0.6px;text-indent:0.6px">13</div>
<div style="position:absolute;left:168.4px;top:424.95px;width:30px;text-align:center;font-size:10px;line-height:12px;color:#b4b4b0">14</div>
<div style="position:absolute;left:196.4px;top:424.95px;width:30px;text-align:center;font-size:10px;line-height:12px;color:#b4b4b0">15</div>
<div style="position:absolute;left:33px;top:446.5px;width:24px;height:22px;border-radius:2.5px;background:#efefe9;color:#222;border:1px solid #2a2a2a;font-size:10px;line-height:20px;text-align:center;font-weight:400;-webkit-text-stroke:0.3px currentColor;letter-spacing:0.6px;text-indent:0.6px">16</div>
<div style="position:absolute;left:60.599999999999994px;top:446.5px;width:24px;height:22px;border-radius:2.5px;background:#efefe9;color:#222;border:1px solid #2a2a2a;font-size:10px;line-height:20px;text-align:center;font-weight:400;-webkit-text-stroke:0.3px currentColor;letter-spacing:0.6px;text-indent:0.6px">17</div>
<div style="position:absolute;left:88px;top:446.5px;width:24px;height:22px;border-radius:2.5px;background:#efefe9;color:#222;border:1px solid #2a2a2a;font-size:10px;line-height:20px;text-align:center;font-weight:400;-webkit-text-stroke:0.3px currentColor;letter-spacing:0.6px;text-indent:0.6px">18</div>
<div style="position:absolute;left:115.4px;top:446.5px;width:24px;height:22px;border-radius:2.5px;background:#efefe9;color:#222;border:1px solid #2a2a2a;font-size:10px;line-height:20px;text-align:center;font-weight:400;-webkit-text-stroke:0.3px currentColor;letter-spacing:0.6px;text-indent:0.6px">19</div>
<div style="position:absolute;left:143.4px;top:446.5px;width:24px;height:22px;border-radius:2.5px;background:#efefe9;color:#222;border:1px solid #2a2a2a;font-size:10px;line-height:20px;text-align:center;font-weight:400;-webkit-text-stroke:0.3px currentColor;letter-spacing:0.6px;text-indent:0.6px">20</div>
<div style="position:absolute;left:168.4px;top:451.95px;width:30px;text-align:center;font-size:10px;line-height:12px;color:#b4b4b0">21</div>
<div style="position:absolute;left:196.4px;top:451.95px;width:30px;text-align:center;font-size:10px;line-height:12px;color:#b4b4b0">22</div>
<div style="position:absolute;left:33px;top:473.5px;width:24px;height:22px;border-radius:2.5px;background:#efefe9;color:#222;border:1px solid #2a2a2a;font-size:10px;line-height:20px;text-align:center;font-weight:400;-webkit-text-stroke:0.3px currentColor;letter-spacing:0.6px;text-indent:0.6px">23</div>
<div style="position:absolute;left:60.599999999999994px;top:473.5px;width:24px;height:22px;border-radius:2.5px;background:#efefe9;color:#222;border:1px solid #2a2a2a;font-size:10px;line-height:20px;text-align:center;font-weight:400;-webkit-text-stroke:0.3px currentColor;letter-spacing:0.6px;text-indent:0.6px">24</div>
<div style="position:absolute;left:88px;top:473.5px;width:24px;height:22px;border-radius:2.5px;background:#efefe9;color:#222;border:1px solid #2a2a2a;font-size:10px;line-height:20px;text-align:center;font-weight:400;-webkit-text-stroke:0.3px currentColor;letter-spacing:0.6px;text-indent:0.6px">25</div>
<div style="position:absolute;left:112.4px;top:478.95px;width:30px;text-align:center;font-size:10px;line-height:12px;color:#b4b4b0">26</div>
<div style="position:absolute;left:143.4px;top:473.5px;width:24px;height:22px;border-radius:2.5px;background:#efefe9;color:#222;border:1px solid #2a2a2a;font-size:10px;line-height:20px;text-align:center;font-weight:400;-webkit-text-stroke:0.3px currentColor;letter-spacing:0.6px;text-indent:0.6px">27</div>
<div style="position:absolute;left:168.4px;top:478.95px;width:30px;text-align:center;font-size:10px;line-height:12px;color:#b4b4b0">28</div>
<div style="position:absolute;left:196.4px;top:478.95px;width:30px;text-align:center;font-size:10px;line-height:12px;color:#b4b4b0">29</div>
<div style="position:absolute;left:33px;top:500.5px;width:24px;height:22px;border-radius:2.5px;background:#efefe9;color:#222;border:1px solid #2a2a2a;font-size:10px;line-height:20px;text-align:center;font-weight:400;-webkit-text-stroke:0.3px currentColor;letter-spacing:0.6px;text-indent:0.6px">30</div>
<div style="position:absolute;left:57.599999999999994px;top:505.95px;width:30px;text-align:center;font-size:10px;line-height:12px;color:#b4b4b0">1</div>
<div style="position:absolute;left:85px;top:505.95px;width:30px;text-align:center;font-size:10px;line-height:12px;color:#b4b4b0">2</div>
<div style="position:absolute;left:112.4px;top:505.95px;width:30px;text-align:center;font-size:10px;line-height:12px;color:#b4b4b0">3</div>
<div style="position:absolute;left:140.4px;top:505.95px;width:30px;text-align:center;font-size:10px;line-height:12px;color:#b4b4b0">4</div>
<div style="position:absolute;left:168.4px;top:505.95px;width:30px;text-align:center;font-size:10px;line-height:12px;color:#b4b4b0">5</div>
<div style="position:absolute;left:196.4px;top:505.95px;width:30px;text-align:center;font-size:10px;line-height:12px;color:#b4b4b0">6</div>
<div style="position:absolute;left:241px;top:331px;width:1px;height:155px;background:#d8d8d2"></div>
<div style="position:absolute;left:257px;top:331px;width:55px;height:27px;border:1px solid #2a2a2a;border-radius:3px;background:#efefe9;font-size:10px;line-height:25px;text-align:center;color:#333">TODAY</div>
<div style="position:absolute;left:315px;top:331px;width:55px;height:27px;border:1px solid #2a2a2a;border-radius:3px;background:#efefe9;font-size:10px;line-height:25px;text-align:center;color:#333">TOM</div>
<div style="position:absolute;left:257px;top:362px;width:55px;height:27px;border:1px solid #2a2a2a;border-radius:3px;background:#efefe9;font-size:10px;line-height:25px;text-align:center;color:#333">SPOT</div>
<div style="position:absolute;left:315px;top:362px;width:26px;height:27px;border:1px solid #2a2a2a;border-radius:3px;background:#efefe9;font-size:10px;line-height:25px;text-align:center;color:#333">1D</div>
<div style="position:absolute;left:343px;top:362px;width:27px;height:27px;border:1px solid #2a2a2a;border-radius:3px;background:#efefe9;font-size:10px;line-height:25px;text-align:center;color:#333">1W</div>
<div style="position:absolute;left:257px;top:393px;width:26px;height:27px;border:1px solid #2a2a2a;border-radius:3px;background:#efefe9;font-size:10px;line-height:25px;text-align:center;color:#333">2W</div>
<div style="position:absolute;left:286px;top:393px;width:26px;height:27px;border:1px solid #2a2a2a;border-radius:3px;background:#efefe9;font-size:10px;line-height:25px;text-align:center;color:#333">3W</div>
<div style="position:absolute;left:315px;top:393px;width:26px;height:27px;border:1px solid #2a2a2a;border-radius:3px;background:#efefe9;font-size:10px;line-height:25px;text-align:center;color:#333">1M</div>
<div style="position:absolute;left:343px;top:393px;width:27px;height:27px;border:1px solid #2a2a2a;border-radius:3px;background:#efefe9;font-size:10px;line-height:25px;text-align:center;color:#333">2M</div>
<div style="position:absolute;left:257px;top:424px;width:26px;height:27px;border:1px solid #2a2a2a;border-radius:3px;background:#efefe9;font-size:10px;line-height:25px;text-align:center;color:#333">3M</div>
<div style="position:absolute;left:286px;top:424px;width:26px;height:27px;border:1px solid #2a2a2a;border-radius:3px;background:#efefe9;font-size:10px;line-height:25px;text-align:center;color:#333">4M</div>
<div style="position:absolute;left:315px;top:424px;width:26px;height:27px;border:1px solid #2a2a2a;border-radius:3px;background:#efefe9;font-size:10px;line-height:25px;text-align:center;color:#333">5M</div>
<div style="position:absolute;left:343px;top:424px;width:27px;height:27px;border:1px solid #2a2a2a;border-radius:3px;background:#e1e1db;font-size:10px;line-height:25px;text-align:center;color:#333">6M</div>
<div style="position:absolute;left:257px;top:455px;width:26px;height:27px;border:1px solid #2a2a2a;border-radius:3px;background:#efefe9;font-size:10px;line-height:25px;text-align:center;color:#333">9M</div>
<div style="position:absolute;left:286px;top:455px;width:26px;height:27px;border:1px solid #2a2a2a;border-radius:3px;background:#efefe9;font-size:10px;line-height:25px;text-align:center;color:#333">1Y</div>
</body></html>
